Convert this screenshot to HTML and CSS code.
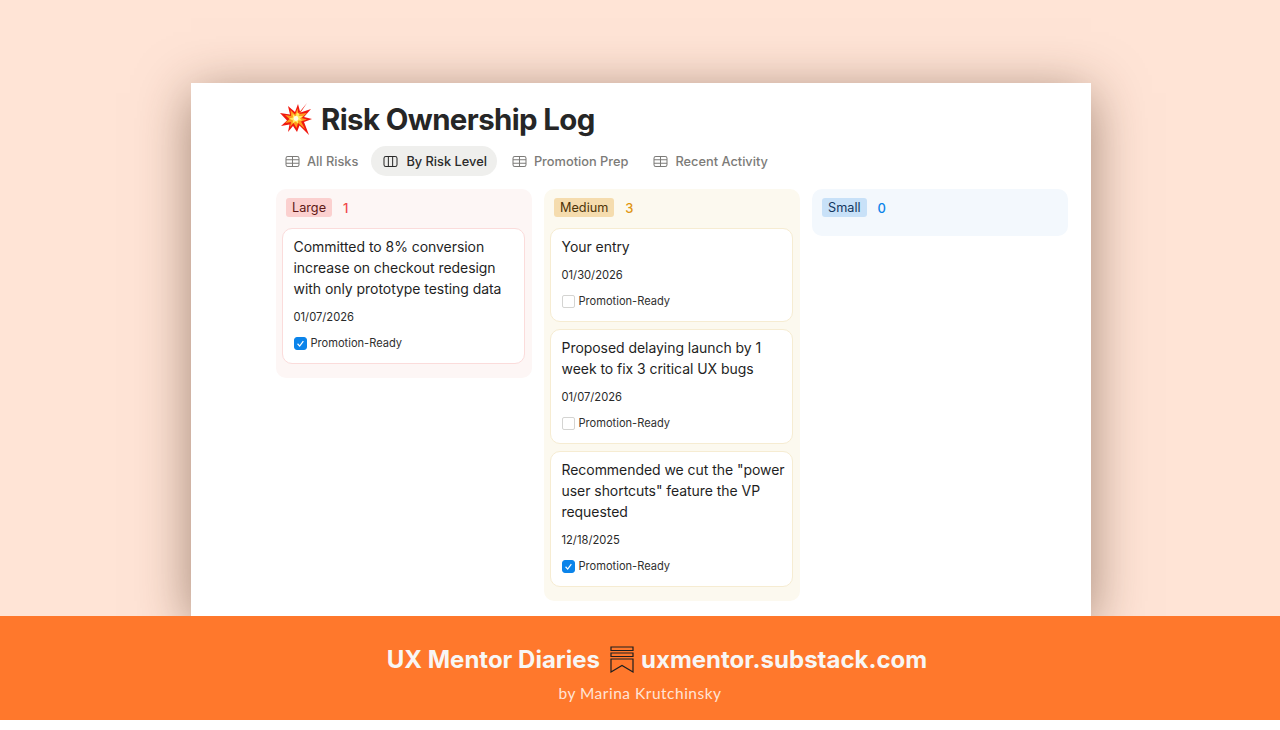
FILE: index.html
```html
<!DOCTYPE html>
<html lang="en">
<head>
  <meta charset="UTF-8" />
  <title>Risk Ownership Log</title>
  <link rel="stylesheet" href="styles.css">
</head>
<body>
  <div class="stage">
    <div class="window">
      <h1 class="page-title">
        <svg class="emoji" viewBox="0 0 32 32" aria-hidden="true">
          <polygon fill="#f0180f" points="27,0 20.5,9.5 31,6 24,14 32,16 24,19 29,32 19.5,22.5 17,29 13,23 8,29 9.5,21.5 1,23 7,17.5 0,10 10,11.5 8,3 15,9 18,1 20,8.5"/>
          <polygon fill="#ff9a1c" points="23,6 19,11 27,10 21.5,15 27,16.5 21,18.5 25,26 18,20 16.5,25 13.5,20 10,24 11,19 5,20 9.5,16 5,12 11,13 10.5,7 15,11.5 17.5,5.5 18.5,10.5"/>
          <polygon fill="#ffec5c" points="19.5,11 18.5,13 23,13 20,15.5 22,17.5 18,17.5 18,20.5 15.5,18.5 12.5,20.5 13,17.5 9,15.5 13,14.5 12.5,10.5 15.5,13.5 17,9.5"/>
          <circle fill="#fffde8" cx="16" cy="15.5" r="2.4"/>
        </svg>
        Risk Ownership Log
      </h1>

      <div class="tabs">
        <div class="tab">
          <svg class="tab-icon" viewBox="0 0 16 14"><rect x="1" y="1.5" width="14" height="11" rx="2"/><path d="M1 5.2h14M1 8.8h14M8 1.5v11"/></svg>
          All Risks
        </div>
        <div class="tab active">
          <svg class="tab-icon" viewBox="0 0 16 14"><rect x="1" y="1.5" width="14" height="11" rx="2"/><path d="M5.7 1.5v11M10.3 1.5v11"/></svg>
          By Risk Level
        </div>
        <div class="tab">
          <svg class="tab-icon" viewBox="0 0 16 14"><rect x="1" y="1.5" width="14" height="11" rx="2"/><path d="M1 5.2h14M1 8.8h14M8 1.5v11"/></svg>
          Promotion Prep
        </div>
        <div class="tab">
          <svg class="tab-icon" viewBox="0 0 16 14"><rect x="1" y="1.5" width="14" height="11" rx="2"/><path d="M1 5.2h14M1 8.8h14M8 1.5v11"/></svg>
          Recent Activity
        </div>
      </div>

      <div class="board">
        <div class="column large">
          <div class="column-head"><span class="pill">Large</span><span class="count">1</span></div>
          <div class="card">
            <div class="card-title">Committed to 8% conversion increase on checkout redesign with only prototype testing data</div>
            <div class="card-date">01/07/2026</div>
            <div class="card-check">
              <span class="box checked"><svg viewBox="0 0 12 12"><path d="M2.8 6.3l2.3 2.5 4-5.4"/></svg></span>
              Promotion-Ready
            </div>
          </div>
        </div>

        <div class="column medium">
          <div class="column-head"><span class="pill">Medium</span><span class="count">3</span></div>
          <div class="card">
            <div class="card-title">Your entry</div>
            <div class="card-date">01/30/2026</div>
            <div class="card-check"><span class="box"></span> Promotion-Ready</div>
          </div>
          <div class="card">
            <div class="card-title">Proposed delaying launch by 1 week to fix 3 critical UX bugs</div>
            <div class="card-date">01/07/2026</div>
            <div class="card-check"><span class="box"></span> Promotion-Ready</div>
          </div>
          <div class="card">
            <div class="card-title">Recommended we cut the "power user shortcuts" feature the VP requested</div>
            <div class="card-date">12/18/2025</div>
            <div class="card-check">
              <span class="box checked"><svg viewBox="0 0 12 12"><path d="M2.8 6.3l2.3 2.5 4-5.4"/></svg></span>
              Promotion-Ready
            </div>
          </div>
        </div>

        <div class="column small">
          <div class="column-head"><span class="pill">Small</span><span class="count">0</span></div>
        </div>
      </div>
    </div>
  </div>

  <div class="banner">
    <div class="banner-main">
      <span>UX Mentor Diaries</span>
      <svg class="substack" viewBox="0 0 24 27" aria-hidden="true">
        <path d="M1 1h22v3.5H1zM1 7h22v3.5H1zM1 13h22v13l-11-6.5L1 26z"/>
      </svg>
      <span>uxmentor.substack.com</span>
    </div>
    <div class="banner-sub">by Marina Krutchinsky</div>
  </div>
</body>
</html>
```

FILE: styles.css
```css
body {
  margin: 0;
  background-color: #fff;
  font-family: Inter, "Liberation Sans", sans-serif;
  color: #1f1f1f;
}

.stage {
  height: 616px;
  box-sizing: border-box;
  padding: 83px 0 0 2px;
  background-color: #ffe4d6;
  display: flex;
  justify-content: center;
  overflow: hidden;
}

.window {
  width: 900px;
  height: 533px;
  box-sizing: border-box;
  padding: 18px 23px 0 85px;
  background-color: #fff;
  box-shadow: 0 10px 50px rgba(70, 40, 20, 0.5);
}

.page-title {
  margin: 0 0 0 4px;
  height: 36px;
  display: flex;
  align-items: center;
  gap: 9px;
  font-size: 29.4px;
  font-weight: 700;
  letter-spacing: -0.6px;
  color: #262626;
}

.emoji {
  width: 32px;
  height: 32px;
  flex: none;
}

/* tabs */
.tabs {
  display: flex;
  align-items: center;
  gap: 3px;
  margin: 9px 0 0 -3px;
  height: 30px;
}

.tab {
  display: flex;
  align-items: center;
  gap: 7px;
  height: 30px;
  padding: 0 10px 0 12px;
  border-radius: 15px;
  font-size: 12.8px;
  font-weight: 500;
  color: #7c7b78;
}

.tab.active {
  background-color: #efefed;
  color: #2a2a2a;
  padding: 0 10px 0 12px;
  gap: 8px;
}

.tab-icon {
  width: 15px;
  height: 13px;
  fill: none;
  stroke: currentColor;
  stroke-width: 1.1;
}

/* board */
.board {
  display: flex;
  align-items: flex-start;
  gap: 12px;
  margin-top: 13px;
}

.column {
  width: 256px;
  box-sizing: border-box;
  padding: 0 7px 14px 6px;
  border-radius: 10px;
}

.column-head {
  display: flex;
  align-items: center;
  gap: 11px;
  height: 39px;
  box-sizing: border-box;
  padding: 0 0 2px 4px;
  font-size: 13px;
}

.pill {
  padding: 1px 6px;
  line-height: 17px;
  border-radius: 3px;
  font-size: 12.7px;
}

.count {
  font-weight: 500;
}

.large { background-color: #fdf6f5; }
.large .pill { background-color: #fbd0cf; color: #5d1715; }
.large .count { color: #f0484a; }
.large .card { border-color: #fbdcdb; }

.medium { background-color: #fcf9ef; }
.medium .pill { background-color: #f5dcae; color: #4d3408; }
.medium .count { color: #e0950f; }
.medium .card { border-color: #f6ecd2; }

.small { background-color: #f3f8fd; height: 47px; padding-bottom: 0; }
.small .pill { background-color: #c8e1f8; color: #12375f; }
.small .count { color: #0b84ea; }

.card {
  background-color: #fff;
  border: 1px solid #eee;
  border-radius: 10px;
  padding: 7px 3px 11px 10.5px;
  margin-bottom: 7px;
}

.card:last-child {
  margin-bottom: 0;
}

.card-title {
  font-size: 14px;
  letter-spacing: -0.05px;
  line-height: 21px;
  color: #1f1f1f;
}

.card-date {
  margin-top: 9px;
  font-size: 11.2px;
  line-height: 18px;
  color: #2a2a2a;
}

.card-check {
  display: flex;
  align-items: center;
  gap: 4px;
  margin-top: 8px;
  font-size: 11.1px;
  line-height: 18px;
  color: #2f2f2f;
}

.box {
  width: 13px;
  height: 13px;
  box-sizing: border-box;
  border: 1px solid #d4d4d2;
  border-radius: 2px;
  flex: none;
}

.box.checked {
  background-color: #0b84ea;
  border-color: #0b84ea;
  border-radius: 3px;
}

.box svg {
  display: block;
  width: 11px;
  height: 11px;
  fill: none;
  stroke: #fff;
  stroke-width: 1.3;
}

/* orange strip */
.banner {
  height: 104px;
  box-sizing: border-box;
  padding-top: 26px;
  background-color: #ff782c;
  text-align: center;
  color: #f8f6f4;
}

.banner-main {
  display: flex;
  justify-content: center;
  align-items: center;
  gap: 8px;
  height: 34px;
  margin-left: 34px;
  font-size: 24px;
  font-weight: 700;
}

.substack {
  width: 24px;
  height: 27px;
  margin: 0 -1px 0 2px;
  fill: none;
  stroke: #1f1f1f;
  stroke-width: 1.2;
}

.banner-sub {
  margin-top: 8px;
  font-family: Lato, sans-serif;
  font-size: 15.5px;
  letter-spacing: 0.5px;
  color: #ffe4d6;
}
```
